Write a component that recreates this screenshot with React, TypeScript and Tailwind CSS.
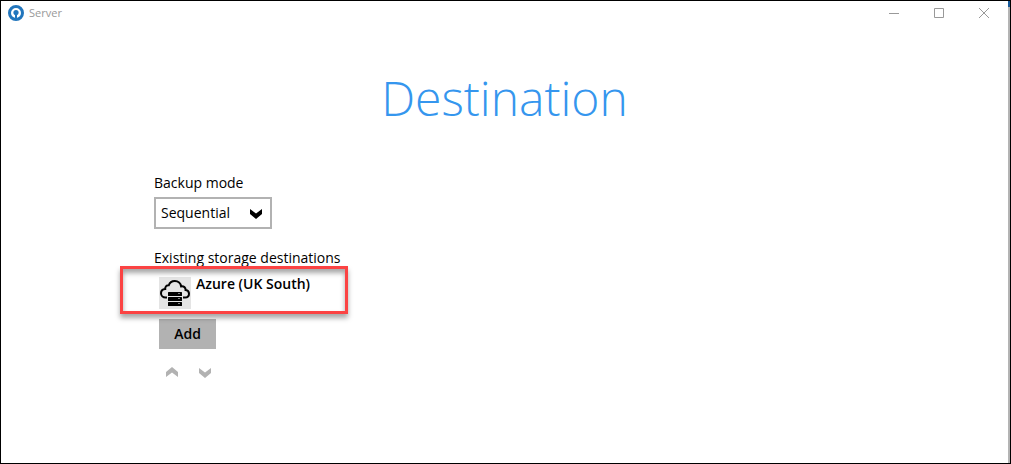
import React, { useState } from 'react'

type IconPropsType = {
    className?: string;
}

const LogoIcon = ({ className }: IconPropsType) => (
    <svg className={className} viewBox="0 0 16 16" aria-hidden="true">
        <circle cx="8" cy="8" r="6.5" fill="#fff" stroke="#2276bd" strokeWidth="3" />
        <circle cx="8" cy="7.5" r="2.6" fill="#2276bd" />
        <path d="M7 9h2v5H7z" fill="#2276bd" />
    </svg>
)

const ChevronIcon = ({ className }: IconPropsType) => (
    <svg className={className} viewBox="0 0 12 10" fill="currentColor" aria-hidden="true">
        <path d="M0 0l6 4.500L12 0v5L6 10 0 5z" />
    </svg>
)

const CloudServerIcon = ({ className }: IconPropsType) => (
    <svg className={className} viewBox="0 0 32 32" aria-hidden="true">
        <path
            d="M8 20.6H6.6C4 20.6 2 18.7 2 16.3c0-2.5 1.8-4.2 4.2-4.3C6 9.600 7.700 8 9.800 8.200c.8-2.500 3.200-4.200 6-4.200 3.400 0 5.900 2.300 6.300 5.400 2.700-.5 4.700 1.200 4.500 3.700 2 .3 3.400 1.800 3.400 3.700 0 2.200-1.700 3.800-4 3.800h-2"
            fill="none"
            stroke="#000"
            strokeWidth="2"
        />
        <rect x="9" y="15" width="14" height="4" rx=".5" />
        <rect x="9" y="20" width="14" height="4" rx=".5" />
        <rect x="9" y="25" width="14" height="4" rx=".5" />
        <path d="M19.500 16.500h1M19.500 21.500h1M19.500 26.500h1" stroke="#fff" strokeWidth="1" />
    </svg>
)

const TitleBar = () => {
    return (
        <header className="flex h-6 items-center justify-between pl-[7px] pr-[19px] text-[#999]">
            <div className="flex items-center gap-[5px]">
                <LogoIcon className="size-4" />
                <span className="text-[11px] leading-4">Server</span>
            </div>
            <div className="flex items-center gap-[35px]">
                <button type="button" aria-label="Minimize">
                    <svg className="size-[10px]" viewBox="0 0 10 10" stroke="currentColor">
                        <path d="M0 5.500h10" />
                    </svg>
                </button>
                <button type="button" aria-label="Maximize">
                    <svg className="size-[10px]" viewBox="0 0 10 10" stroke="currentColor" fill="none">
                        <path d="M.5.5h9v9h-9z" />
                    </svg>
                </button>
                <button type="button" aria-label="Close">
                    <svg className="size-[10px]" viewBox="0 0 10 10" stroke="currentColor">
                        <path d="M0 0l10 10M10 0L0 10" />
                    </svg>
                </button>
            </div>
        </header>
    )
}

const App = () => {
    const [mode, setMode] = useState("sequential")

    return (
        <div className="flex h-screen border border-black bg-white font-['Open_Sans',sans-serif] text-sm text-black">
            <div className="min-w-0 flex-1">
                <TitleBar />
                <main>
                    <h1 className="mt-[41px] text-center text-5xl leading-[64px] font-light text-[#3596ee]">Destination</h1>
                    <div className="mt-[43px] ml-[153px] flex flex-col items-start">
                        <label htmlFor="mode" className="leading-5">Backup mode</label>
                        <div className="relative mt-1">
                            <select
                                id="mode"
                                value={mode}
                                onChange={(e) => setMode(e.target.value)}
                                className="h-8 w-[118px] appearance-none border-2 border-[#b2b2b2] bg-white pl-[5px]"
                            >
                                <option value="sequential">Sequential</option>
                                <option value="concurrent">Concurrent</option>
                            </select>
                            <ChevronIcon className="pointer-events-none absolute top-3 right-[10px] h-[10px] w-3" />
                        </div>

                        <h2 className="mt-[19px] leading-5">Existing storage destinations</h2>
                        <ul className="relative mt-[9px] ml-[5px]">
                            <li className="flex items-start gap-[5px]">
                                <CloudServerIcon className="size-8 bg-[#e4e4e4]" />
                                <span className="leading-[14px] font-semibold">Azure (UK South)</span>
                            </li>
                            <li
                                aria-hidden="true"
                                className="pointer-events-none absolute -top-[11px] -left-[39px] h-12 w-[228px] border-3 border-[#fb4343] shadow-[0_4px_5px_rgba(0,0,0,0.35),inset_0_4px_5px_rgba(0,0,0,0.35)]"
                            ></li>
                        </ul>
                        <button type="button" className="mt-[10px] ml-[5px] h-[30px] w-[57px] bg-[#b2b2b2] font-semibold">
                            Add
                        </button>
                        <div className="mt-[17px] ml-3 flex gap-[21px] text-[#b2b2b2]">
                            <button type="button" aria-label="Move up">
                                <ChevronIcon className="h-[10px] w-3 rotate-180" />
                            </button>
                            <button type="button" aria-label="Move down" className="pt-[2px]">
                                <ChevronIcon className="h-[10px] w-3" />
                            </button>
                        </div>
                    </div>
                </main>
            </div>
            <div className="w-[2px] bg-[#b4b4b4]">
                <div className="h-[6px] bg-[#16599a]"></div>
            </div>
        </div>
    )
}

export default App
